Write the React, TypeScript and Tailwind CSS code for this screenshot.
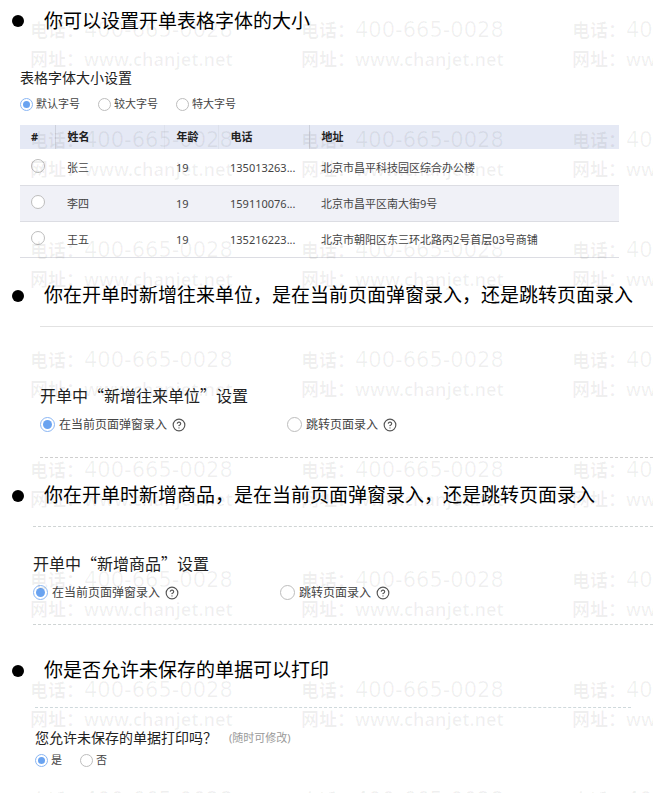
import { useState } from "react";
import type { ReactNode } from "react";
import { CircleHelp } from "lucide-react";

type RadioOptionProps = {
    name: string;
    label: string;
    checked: boolean;
    onSelect: () => void;
};

const rows = [
    { name: "张三", age: 19, phone: "135013263...", address: "北京市昌平科技园区综合办公楼" },
    { name: "李四", age: 19, phone: "159110076...", address: "北京市昌平区南大街9号" },
    { name: "王五", age: 19, phone: "135216223...", address: "北京市朝阳区东三环北路丙2号首层03号商铺" },
];

const radioBase =
    "grid shrink-0 appearance-none place-items-center rounded-full border border-[#bdbdbd] bg-white checked:border-[#8ab6f4] before:rounded-full checked:before:bg-[#6aa3f0]";

function Heading({ children }: { children: ReactNode }) {
    return (
        <h2 className="flex h-7 items-center gap-5 pl-3 text-[19px] font-normal whitespace-nowrap text-black">
            <span className="size-3 shrink-0 rounded-full bg-black" />
            {children}
        </h2>
    );
}

function SmallOption({ name, label, checked, onSelect }: RadioOptionProps) {
    return (
        <label className="flex h-4 items-center gap-[3px] text-[11px] text-[#444]">
            <input
                type="radio"
                name={name}
                checked={checked}
                onChange={onSelect}
                className={`${radioBase} size-[13px] before:size-[7px]`}
            />
            {label}
        </label>
    );
}

function EntryOption({ name, label, checked, onSelect }: RadioOptionProps) {
    return (
        <div className="flex h-5 w-[247px] items-center gap-1 text-xs text-[#444]">
            <label className="flex items-center gap-1">
                <input
                    type="radio"
                    name={name}
                    checked={checked}
                    onChange={onSelect}
                    className={`${radioBase} size-[15px] before:size-[9px]`}
                />
                {label}
            </label>
            <button type="button" aria-label="说明" className="ml-px text-[#555]">
                <CircleHelp size={14} strokeWidth={2} />
            </button>
        </div>
    );
}

function EntryMode({ title, name }: { title: string; name: string }) {
    const [mode, setMode] = useState("popup");

    return (
        <>
            <h3 className="font-['Noto_Sans_CJK_SC',sans-serif] text-base leading-6 text-[#222]">
                {title}
            </h3>
            <div className="mt-2 flex">
                <EntryOption
                    name={name}
                    label="在当前页面弹窗录入"
                    checked={mode === "popup"}
                    onSelect={() => setMode("popup")}
                />
                <EntryOption
                    name={name}
                    label="跳转页面录入"
                    checked={mode === "page"}
                    onSelect={() => setMode("page")}
                />
            </div>
        </>
    );
}

function CustomerTable() {
    const [selected, setSelected] = useState("");

    return (
        <table className="mt-[13px] w-full table-fixed border-collapse text-left text-[11px] text-[#444]">
            <colgroup>
                <col className="w-[35px]" />
                <col className="w-[109px]" />
                <col className="w-[54px]" />
                <col className="w-[91px]" />
                <col />
            </colgroup>
            <thead>
                <tr className="h-6 bg-[#e5e9f5] text-[#222]">
                    <th className="border-r border-[#cdd1dc] pl-[11px]">#</th>
                    <th className="border-r border-[#dde1ec] pl-3">姓名</th>
                    <th className="border-r border-[#dde1ec] pl-3">年龄</th>
                    <th className="border-r border-[#cdd1dc] pl-3">电话</th>
                    <th className="pl-3">地址</th>
                </tr>
            </thead>
            <tbody>
                {rows.map((row) => (
                    <tr key={row.name} className="h-9 border-b border-[#dcdde3] even:bg-[#f0f1f7]">
                        <td className="pb-0.5 pl-[11px]">
                            <input
                                type="radio"
                                name="customer"
                                aria-label={row.name}
                                checked={selected === row.name}
                                onChange={() => setSelected(row.name)}
                                className={`${radioBase} size-[14px] before:size-[8px]`}
                            />
                        </td>
                        <td className="pt-0.5 pl-3">{row.name}</td>
                        <td className="pt-0.5 pl-3">{row.age}</td>
                        <td className="pt-0.5 pl-3">{row.phone}</td>
                        <td className="pt-0.5 pl-3">{row.address}</td>
                    </tr>
                ))}
            </tbody>
        </table>
    );
}

function Watermark() {
    return (
        <div
            aria-hidden="true"
            className="pointer-events-none absolute inset-0 grid auto-rows-[110px] grid-cols-[repeat(3,271px)] overflow-hidden pt-4 pl-[30px] text-lg leading-[29px] font-semibold whitespace-nowrap text-black/6"
        >
            {Array.from({ length: 24 }, (_, i) => (
                <div key={i}>
                    <p className="flex h-[29px] items-center">
                        电话：
                        <span className="font-['DejaVu_Sans',sans-serif] text-[21px] font-normal">
                            400-665-0028
                        </span>
                    </p>
                    <p>网址：www.chanjet.net</p>
                </div>
            ))}
        </div>
    );
}

export default function App() {
    const [fontSize, setFontSize] = useState("默认字号");
    const [printing, setPrinting] = useState("是");

    return (
        <main
            lang="zh-CN"
            className="relative min-h-screen overflow-hidden bg-white pt-[7px] font-['Noto_Sans','Noto_Sans_CJK_SC',sans-serif]"
        >
            <Heading>你可以设置开单表格字体的大小</Heading>
            <section className="mt-[33px] mr-[34px] ml-5">
                <h3 className="text-sm leading-5 text-[#222]">表格字体大小设置</h3>
                <div className="mt-2 flex gap-[18px]">
                    {["默认字号", "较大字号", "特大字号"].map((size) => (
                        <SmallOption
                            key={size}
                            name="font-size"
                            label={size}
                            checked={fontSize === size}
                            onSelect={() => setFontSize(size)}
                        />
                    ))}
                </div>
                <CustomerTable />
            </section>

            <div className="mt-6">
                <Heading>你在开单时新增往来单位，是在当前页面弹窗录入，还是跳转页面录入</Heading>
            </div>
            <section className="mt-4 ml-10 border-t border-b border-t-[#e2e2e2] border-b-[#cfcfcf] pt-14 pb-[22px] [border-bottom-style:dashed]">
                <EntryMode title="开单中“新增往来单位”设置" name="customer-entry" />
            </section>

            <div className="mt-6">
                <Heading>你在开单时新增商品，是在当前页面弹窗录入，还是跳转页面录入</Heading>
            </div>
            <section className="mt-4 ml-[33px] border-y border-dashed border-[#cfd4d4] pt-6 pb-[21px]">
                <EntryMode title="开单中“新增商品”设置" name="product-entry" />
            </section>

            <div className="mt-8">
                <Heading>你是否允许未保存的单据可以打印</Heading>
            </div>
            <section className="mt-[22px] mr-[22px] ml-[35px] border-t border-dashed border-[#cfd9dc] pt-5">
                <h3 className="flex items-center text-sm leading-5 text-[#222]">
                    您允许未保存的单据打印吗？
                    <small className="ml-3 text-[11px] font-normal text-[#999]">(随时可修改)</small>
                </h3>
                <div className="mt-[5px] flex gap-[18px]">
                    {["是", "否"].map((answer) => (
                        <SmallOption
                            key={answer}
                            name="printing"
                            label={answer}
                            checked={printing === answer}
                            onSelect={() => setPrinting(answer)}
                        />
                    ))}
                </div>
            </section>

            <Watermark />
        </main>
    );
}
